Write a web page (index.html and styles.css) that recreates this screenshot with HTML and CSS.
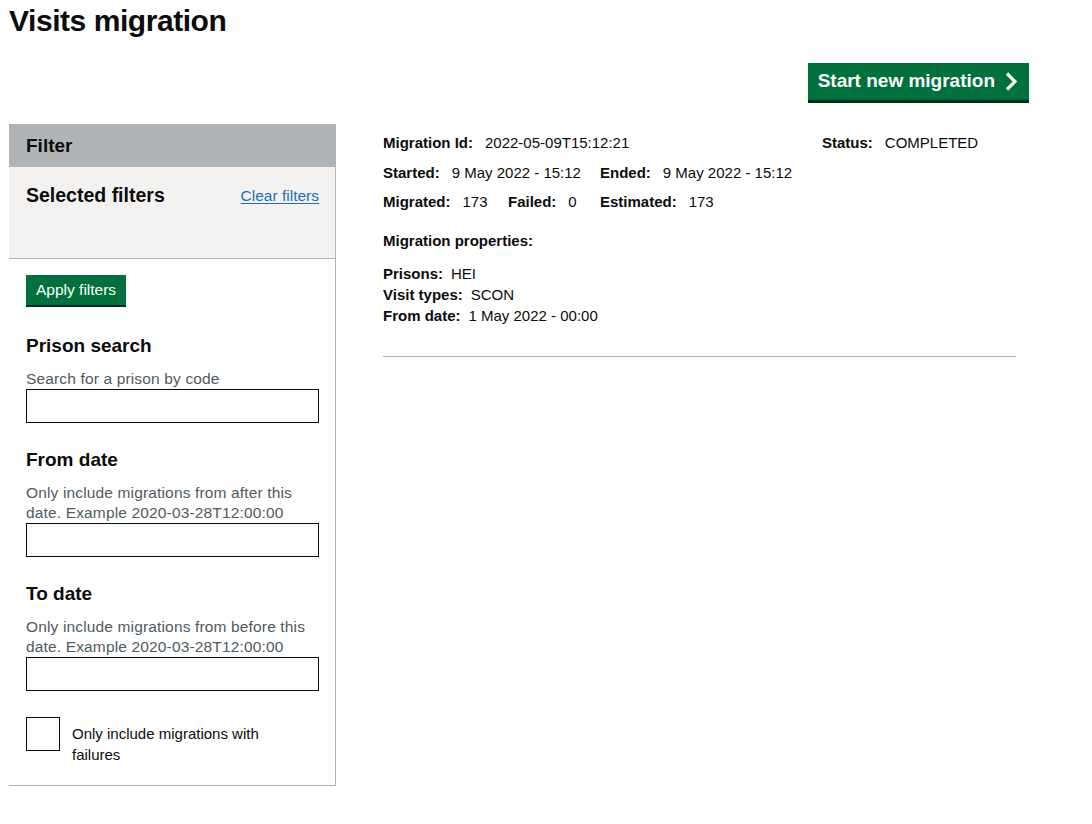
FILE: index.html
```html
<!DOCTYPE html>
<html lang="en">
<head>
<meta charset="utf-8">
<title>Visits migration</title>
<link rel="stylesheet" href="styles.css">
</head>
<body>
<div class="page">
  <h1 class="title">Visits migration</h1>
  <div class="actions">
    <a class="btn-start" href="#">Start new migration
      <svg class="chev" width="13" height="19" viewBox="0 0 13 19" aria-hidden="true"><path d="M2 1.5 L10 9.5 L2 17.5" fill="none" stroke="#fff" stroke-width="3.2"/></svg>
    </a>
  </div>
  <div class="layout">
    <aside class="filter">
      <div class="filter-head">Filter</div>
      <div class="selected">
        <h2 class="selected-title">Selected filters</h2>
        <a class="clear" href="#">Clear filters</a>
      </div>
      <div class="filter-body">
        <button class="btn-apply" type="button">Apply filters</button>
        <div class="field">
          <h3 class="field-label">Prison search</h3>
          <div class="hint">Search for a prison by code</div>
          <input class="input" type="text">
        </div>
        <div class="field">
          <h3 class="field-label">From date</h3>
          <div class="hint">Only include migrations from after this date. Example 2020-03-28T12:00:00</div>
          <input class="input" type="text">
        </div>
        <div class="field">
          <h3 class="field-label">To date</h3>
          <div class="hint">Only include migrations from before this date. Example 2020-03-28T12:00:00</div>
          <input class="input" type="text">
        </div>
        <label class="check">
          <span class="box"></span>
          <span class="check-label">Only include migrations with failures</span>
        </label>
      </div>
    </aside>
    <main class="results">
      <div class="migration">
        <div class="row">
          <span class="cell c-wide"><b>Migration Id:</b>2022-05-09T15:12:21</span>
          <span class="cell"><b>Status:</b>COMPLETED</span>
        </div>
        <div class="row">
          <span class="cell c-half"><b>Started:</b>9 May 2022 - 15:12</span>
          <span class="cell"><b>Ended:</b>9 May 2022 - 15:12</span>
        </div>
        <div class="row">
          <span class="cell c-mig"><b>Migrated:</b>173</span>
          <span class="cell c-fail"><b>Failed:</b>0</span>
          <span class="cell"><b>Estimated:</b>173</span>
        </div>
        <div class="props-title">Migration properties:</div>
        <div class="props">
          <div><b>Prisons:</b>HEI</div>
          <div><b>Visit types:</b>SCON</div>
          <div><b>From date:</b>1 May 2022 - 00:00</div>
        </div>
      </div>
      <hr class="sep">
    </main>
  </div>
</div>
</body>
</html>
```

FILE: styles.css
```css
* { box-sizing: border-box; }
html, body { margin: 0; padding: 0; background: #fff; }
body {
  font-family: "Liberation Sans", Arial, sans-serif;
  color: #0b0c0c;
}
.page {
  padding: 0 0 0 9px;
  width: 1029px;
}
.title {
  margin: 0;
  padding-top: 3px;
  font-size: 30px;
  line-height: 36px;
  font-weight: 700;
  letter-spacing: -0.45px;
}
.actions {
  display: flex;
  justify-content: flex-end;
  margin-top: 24px;
}
.btn-start {
  display: flex;
  align-items: center;
  gap: 10px;
  height: 37px;
  padding: 0 11px 2px 10px;
  background: #00703c;
  color: #fff;
  font-size: 19px;
  font-weight: 700;
  text-decoration: none;
  box-shadow: 0 3px 0 #002d18;
}
.chev { display: block; margin-top: 2px; }
.layout {
  display: flex;
  margin-top: 24px;
  align-items: flex-start;
}
.filter {
  width: 327px;
  flex: none;
  border-right: 1px solid #b1b4b6;
  border-bottom: 1px solid #b1b4b6;
}
.filter-head {
  background: #b1b4b6;
  height: 43px;
  padding: 11px 17px 0;
  font-size: 19px;
  font-weight: 700;
  line-height: 22px;
}
.selected {
  background: #f3f2f1;
  height: 92px;
  border-bottom: 1px solid #b1b4b6;
  display: flex;
  justify-content: space-between;
  align-items: flex-start;
  padding: 17px 16px 0 17px;
}
.selected-title {
  margin: 0;
  font-size: 19.5px;
  line-height: 22px;
  font-weight: 700;
}
.clear {
  color: #1d70b8;
  font-size: 15.5px;
  line-height: 18px;
  margin-top: 3px;
  text-decoration: underline;
  text-underline-offset: 2px;
}
.filter-body {
  padding: 16px 16px 20px 17px;
}
.btn-apply {
  display: block;
  height: 30px;
  padding: 0 10px;
  border: 0;
  background: #00703c;
  color: #fff;
  font-family: inherit;
  font-size: 15.5px;
  box-shadow: 0 2px 0 #002d18;
  margin: 0;
}
.field { margin-top: 29px; }
.field + .field { margin-top: 25px; }
.field-label {
  margin: 0;
  font-size: 19px;
  line-height: 24px;
  font-weight: 700;
}
.hint {
  margin-top: 11px;
  color: #505a5f;
  font-size: 15.5px;
  letter-spacing: 0.15px;
  line-height: 20px;
}
.input {
  display: block;
  width: 293px;
  height: 34px;
  margin: 0;
  border: 1.5px solid #0b0c0c;
  border-radius: 0;
  background: #fff;
}
.check {
  display: flex;
  align-items: flex-start;
  gap: 12px;
  margin-top: 26px;
}
.box {
  flex: none;
  width: 34px;
  height: 34px;
  border: 1.5px solid #0b0c0c;
  background: #fff;
}
.check-label {
  font-size: 15px;
  line-height: 21px;
  padding-top: 6px;
  width: 210px;
}
.results {
  flex: 1;
  padding: 9px 0 0 47px;
}
.migration {
  font-size: 15px;
}
.row {
  display: flex;
  line-height: 20px;
  margin-bottom: 9.5px;
}
.cell b { margin-right: 12px; }
.c-wide { width: 439px; }
.c-half { width: 217px; }
.c-mig { width: 125px; }
.c-fail { width: 92px; }
.props-title {
  font-weight: 700;
  margin-top: 19px;
  line-height: 20px;
}
.props {
  margin-top: 12px;
  line-height: 21px;
}
.props b { margin-right: 8px; }
.sep {
  margin: 30px 0 0;
  width: 633px;
  border: 0;
  border-top: 1px solid #b1b4b6;
  height: 0;
}
```
